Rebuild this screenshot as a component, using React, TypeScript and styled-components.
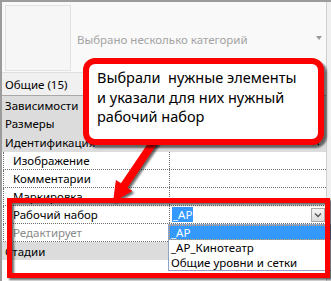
import React from 'react';
import styled, { createGlobalStyle } from 'styled-components';

const GlobalStyle = createGlobalStyle`
  html, body {
    margin: 0;
    padding: 0;
    background: #f0f0f0;
  }
  body {
    width: 331px;
    height: 281px;
    overflow: hidden;
    font-family: "Noto Sans", "Open Sans", Arial, sans-serif;
  }
`;

const Window = styled.div`
  position: relative;
  width: 331px;
  height: 281px;
  box-sizing: border-box;
  border-top: 2px solid #9c9c9c;
  border-left: 2px solid #9c9c9c;
  background: #f0f0f0;
  overflow: hidden;
`;

const Panel = styled.div`
  width: 324px;
  height: 100%;
  border-right: 1px solid #cfcfcf;
  display: flex;
  flex-direction: column;
  background: #fff;
`;

const Header = styled.div`
  height: 70px;
  display: flex;
  align-items: center;
  gap: 6px;
  padding: 0 4px 0 3px;
  background: #f9f9f9;
  border-bottom: 1px solid #dedede;
`;

const Thumb = styled.div`
  width: 64px;
  height: 64px;
  border: 1px solid #e2e2e2;
  background: #f6f6f6;
  flex: none;
  margin-top: 2px;
`;

const TypeName = styled.div`
  flex: 1;
  font-size: 11.5px;
  color: #a3a3a3;
  margin-top: 4px;
`;

const Caret = styled.div`
  width: 0;
  height: 0;
  border-left: 3.5px solid transparent;
  border-right: 3.5px solid transparent;
  border-top: 4px solid #9a9a9a;
  margin-top: 2px;
`;

const TabRow = styled.div`
  height: 22px;
  display: flex;
  align-items: center;
  padding-left: 3px;
  font-size: 11.5px;
  color: #000;
  background: #f0f0f0;
  border-bottom: 1px solid #a8a8a8;
`;

const GroupRow = styled.div<{ $h?: number }>`
  height: ${p => p.$h ?? 18}px;
  display: flex;
  align-items: center;
  justify-content: space-between;
  padding: 0 6px 0 3px;
  font-size: 11.5px;
  color: #000;
  background: #dcdcdc;
`;

const PropRow = styled.div`
  height: 18px;
  box-sizing: border-box;
  display: grid;
  grid-template-columns: 166px 1fr;
  border-bottom: 1px dotted #6e6e6e;
  margin-left: 1px;
  border-left: 1px dotted #6e6e6e;
  background: #fff;
`;

const PropName = styled.div<{ $muted?: boolean }>`
  display: flex;
  align-items: center;
  padding-left: 9px;
  font-size: 11.5px;
  color: ${p => (p.$muted ? '#8a8a8a' : '#000')};
  border-right: 1px dotted #6e6e6e;
`;

const PropValue = styled.div`
  display: flex;
  align-items: center;
  padding: 0 1px 0 2px;
`;

const EmptyRow = styled.div`
  height: 18px;
  background: #fff;
`;

const Selected = styled.span`
  flex: 1;
  font-size: 11.5px;
  line-height: 14px;
  span {
    background: #3399ff;
    color: #fff;
    padding: 0 1px;
  }
`;

const DropButton = styled.div`
  width: 14px;
  height: 14px;
  box-sizing: border-box;
  border: 1px solid #a9a9a9;
  background: linear-gradient(#f4f4f4, #dcdcdc);
  display: flex;
  align-items: center;
  justify-content: center;
`;

const DropList = styled.div`
  position: absolute;
  left: 166px;
  top: 222px;
  width: 162px;
  border: 1px solid #8fa3c8;
  background: #fff;
  font-size: 11.5px;
`;

const DropItem = styled.div<{ $active?: boolean }>`
  height: 15px;
  line-height: 15px;
  padding-left: 2px;
  box-sizing: border-box;
  color: ${p => (p.$active ? '#fff' : '#000')};
  background: ${p => (p.$active ? '#3399ff' : '#fff')};
  outline: ${p => (p.$active ? '1px dotted #e0a060' : 'none')};
  outline-offset: -1px;
`;

const Callout = styled.div`
  position: absolute;
  left: 81px;
  top: 56px;
  width: 241px;
  height: 87px;
  box-sizing: border-box;
  border: 6px solid #ff0000;
  border-radius: 12px;
  background: #fff;
  box-shadow: 3px 3px 2px rgba(0, 0, 0, 0.55);
  padding: 4px 0 0 8px;
  font-size: 14.5px;
  line-height: 19.5px;
  color: #000;
  white-space: pre;
`;

const Highlight = styled.div`
  position: absolute;
  left: 5px;
  top: 196px;
  width: 323px;
  height: 80px;
  box-sizing: border-box;
  border: 5px solid #ff0000;
  filter: drop-shadow(2px 2px 1px rgba(0, 0, 0, 0.6));
`;

const ArrowLayer = styled.svg`
  position: absolute;
  left: -2px;
  top: -2px;
  filter: drop-shadow(2px 2px 1px rgba(0, 0, 0, 0.6));
`;

const Chevrons = () => (
  <svg width="8" height="8" viewBox="0 0 8 8">
    <path d="M1 4 L4 1 L7 4 M1 7 L4 4 L7 7" fill="none" stroke="#222" strokeWidth="1.3" />
  </svg>
);

const DownChevron = () => (
  <svg width="8" height="6" viewBox="0 0 8 6">
    <path d="M1 1.5 L4 4.5 L7 1.5" fill="none" stroke="#555" strokeWidth="1.4" />
  </svg>
);

export default function App() {
  return (
    <>
      <GlobalStyle />
      <Window>
        <Panel>
          <Header>
            <Thumb />
            <TypeName>Выбрано несколько категорий</TypeName>
            <Caret />
          </Header>
          <TabRow>Общие (15)</TabRow>
          <GroupRow>Зависимости</GroupRow>
          <GroupRow>Размеры</GroupRow>
          <GroupRow $h={20}>
            Идентификация
            <Chevrons />
          </GroupRow>
          <PropRow>
            <PropName>Изображение</PropName>
            <PropValue />
          </PropRow>
          <PropRow>
            <PropName>Комментарии</PropName>
            <PropValue />
          </PropRow>
          <PropRow>
            <PropName>Маркировка</PropName>
            <PropValue />
          </PropRow>
          <PropRow>
            <PropName>Рабочий набор</PropName>
            <PropValue>
              <Selected>
                <span>_AP</span>
              </Selected>
              <DropButton>
                <DownChevron />
              </DropButton>
            </PropValue>
          </PropRow>
          <PropRow>
            <PropName $muted>Редактирует</PropName>
            <PropValue />
          </PropRow>
          <GroupRow>Стадии</GroupRow>
          <EmptyRow />
        </Panel>

        <DropList>
          <DropItem $active>_AP</DropItem>
          <DropItem>_AP_Кинотеатр</DropItem>
          <DropItem>Общие уровни и сетки</DropItem>
        </DropList>

        <ArrowLayer width="331" height="281" viewBox="0 0 331 281">
          <polygon
            points="151.7,137.8 120.9,183.3 115.9,179.9 113,202 132.5,191.1 127.5,187.7 158.3,142.2"
            fill="#ff0000"
          />
        </ArrowLayer>
        <Callout>{'Выбрали  нужные элементы\nи указали для них нужный\nрабочий набор'}</Callout>
        <Highlight />
      </Window>
    </>
  );
}
